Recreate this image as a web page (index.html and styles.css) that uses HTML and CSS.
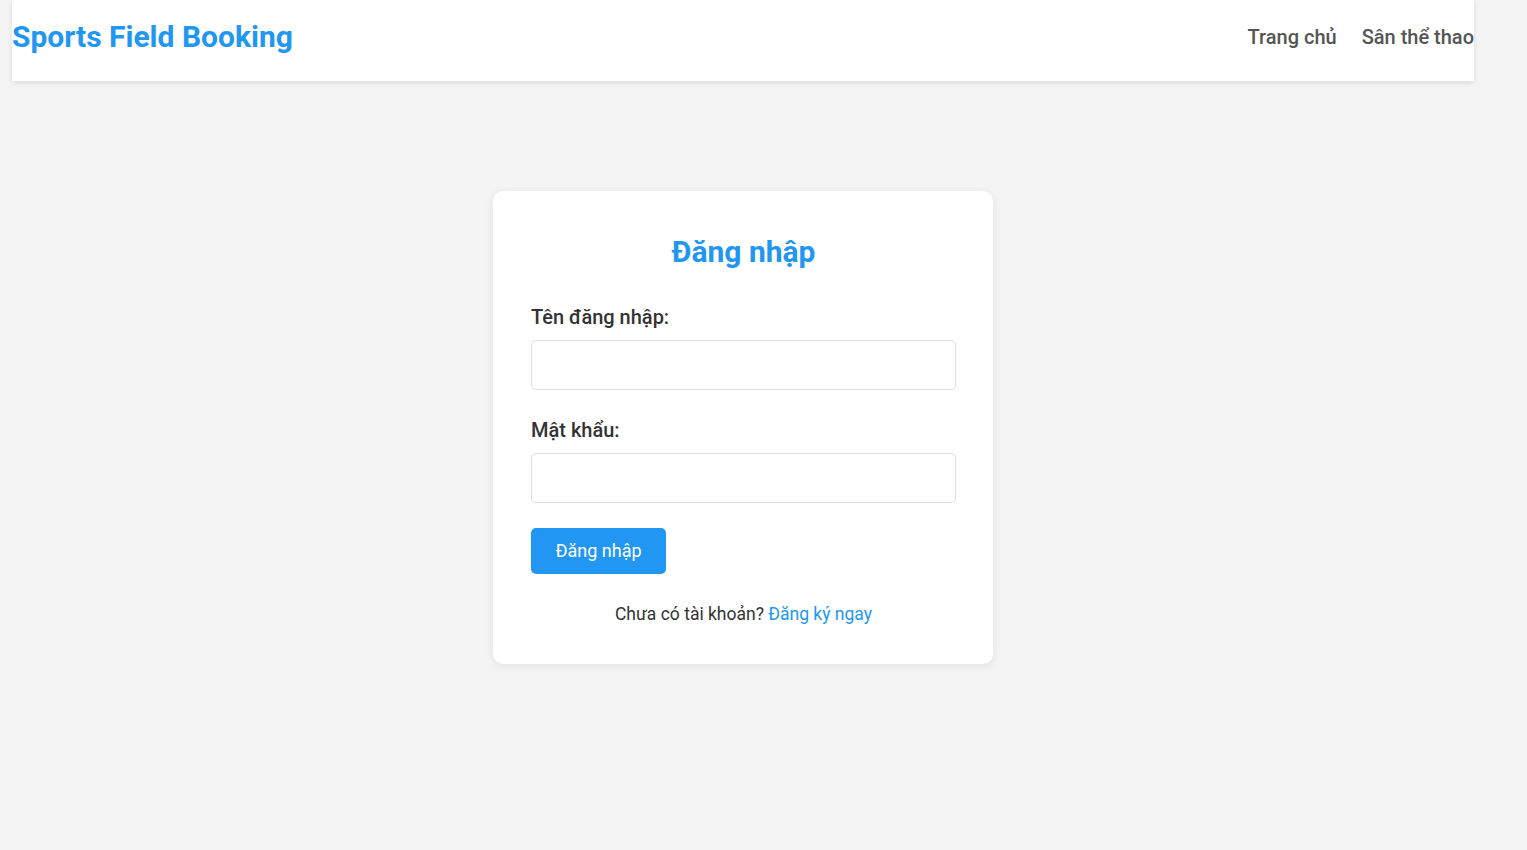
FILE: index.html
```html
<!DOCTYPE html>
<html lang="vi">
<head>
<meta charset="utf-8">
<title>Đăng nhập - Sports Field Booking</title>
<link rel="stylesheet" href="styles.css">
</head>
<body>
<div class="page">
  <header class="site-header">
    <a class="logo" href="#">Sports Field Booking</a>
    <nav class="nav">
      <a href="#">Trang chủ</a>
      <a href="#">Sân thể thao</a>
    </nav>
  </header>
  <main class="main">
    <div class="card">
      <h2 class="card-title">Đăng nhập</h2>
      <form class="form">
        <div class="form-group">
          <label for="username">Tên đăng nhập:</label>
          <input type="text" id="username" class="input">
        </div>
        <div class="form-group form-group-last">
          <label for="password">Mật khẩu:</label>
          <input type="password" id="password" class="input">
        </div>
        <button type="button" class="btn">Đăng nhập</button>
      </form>
      <p class="register">Chưa có tài khoản? <a href="#">Đăng ký ngay</a></p>
    </div>
  </main>
</div>
</body>
</html>
```
FILE: styles.css
```css
* { box-sizing: border-box; }
html, body { margin: 0; padding: 0; }
body {
  background: #f4f4f4;
  font-family: Roboto, "Noto Sans", sans-serif;
  color: #333;
  min-height: 850px;
}
.page {
  margin-left: 12px;
  width: 1462px;
}
.site-header {
  height: 81px;
  padding-bottom: 7px;
  background: #fff;
  box-shadow: 0 2px 5px rgba(0,0,0,0.1);
  display: flex;
  align-items: center;
  justify-content: space-between;
}
.logo {
  font-size: 30px;
  font-weight: 700;
  color: #2196f3;
  text-decoration: none;
  line-height: 36px;
}
.nav { display: flex; gap: 25px; }
.nav a {
  font-size: 20px;
  font-weight: 500;
  color: #555;
  text-decoration: none;
  line-height: 24px;
}
.main {
  padding-top: 110px;
  display: flex;
  justify-content: center;
}
.card {
  width: 500px;
  background: #fff;
  border-radius: 10px;
  box-shadow: 0 2px 10px rgba(0,0,0,0.08);
  padding: 43px 37px 39px 38px;
}
.card-title {
  margin: 0 0 35px;
  text-align: center;
  font-size: 30px;
  line-height: 36px;
  font-weight: 700;
  color: #2196f3;
}
.form-group { margin-bottom: 28px; }
.form-group-last { margin-bottom: 25px; }
.form-group label {
  display: block;
  font-size: 20px;
  font-weight: 500;
  line-height: 24px;
  margin-bottom: 11px;
  color: #333;
}
.input {
  display: block;
  width: 100%;
  height: 50px;
  border: 1px solid #ddd;
  border-radius: 5px;
  background: #fff;
  font-size: 16px;
  padding: 0 12px;
}
.btn {
  display: block;
  width: 135px;
  height: 46px;
  background: #2196f3;
  color: #fff;
  border: none;
  border-radius: 5px;
  font-family: Roboto, sans-serif;
  font-size: 18px;
  padding: 0 0 2px;
}
.register {
  margin: 29px 0 0;
  text-align: center;
  font-size: 17.5px;
  line-height: 22px;
  color: #333;
}
.register a { color: #2196f3; text-decoration: none; }
```
